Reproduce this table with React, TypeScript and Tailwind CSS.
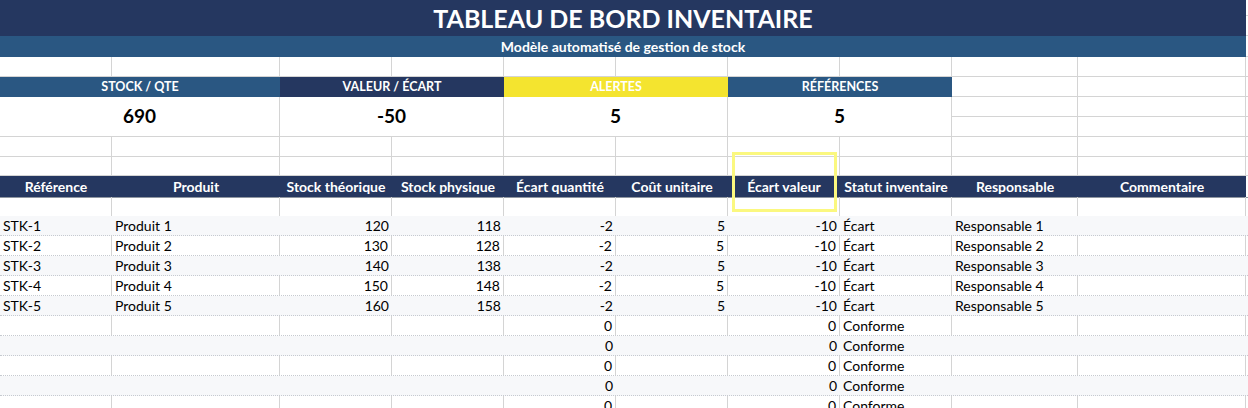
import React from "react";

const GRID =
  "grid grid-cols-[112px_168px_112px_112px_112px_112px_112px_112px_126px_168px_1fr]";
const GL = "border-[#d4d4d4]";

type Row = {
  a: string;
  b: string;
  c: string;
  d: string;
  e: string;
  f: string;
  g: string;
  h: string;
  i: string;
};

const rows: Row[] = [
  ...[1, 2, 3, 4, 5].map((n) => ({
    a: `STK-${n}`,
    b: `Produit ${n}`,
    c: String(110 + n * 10),
    d: String(108 + n * 10),
    e: "-2",
    f: "5",
    g: "-10",
    h: "Écart",
    i: `Responsable ${n}`,
  })),
  ...[1, 2, 3, 4, 5].map(() => ({
    a: "",
    b: "",
    c: "",
    d: "",
    e: "0",
    f: "",
    g: "0",
    h: "Conforme",
    i: "",
  })),
];

function EmptyRow({ h }: { h: string }) {
  return (
    <div className={`${GRID} ${h}`}>
      {Array.from({ length: 10 }).map((_, i) => (
        <div key={i} className={`border-r border-b ${GL}`} />
      ))}
      <div className={`border-b ${GL}`} />
    </div>
  );
}

const headers = [
  "Référence",
  "Produit",
  "Stock théorique",
  "Stock physique",
  "Écart quantité",
  "Coût unitaire",
  "Écart valeur",
  "Statut inventaire",
  "Responsable",
  "Commentaire",
];

function DataRow({ r, idx }: { r: Row; idx: number }) {
  const shaded = idx % 2 === 0;
  const cell = shaded
    ? "px-[3px] whitespace-nowrap overflow-hidden"
    : `px-[3px] whitespace-nowrap overflow-hidden border-r ${GL}`;
  return (
    <div
      className={`${GRID} h-[20px] border-b border-dotted border-[#c6cad0] text-[14px] leading-[19px] text-black ${
        shaded ? "bg-[#f7f8fa]" : "bg-white"
      }`}
    >
      <div className={cell}>{r.a}</div>
      <div className={cell}>{r.b}</div>
      <div className={`${cell} text-right`}>{r.c}</div>
      <div className={`${cell} text-right`}>{r.d}</div>
      <div className={`${cell} text-right`}>{r.e}</div>
      <div className={`${cell} text-right`}>{r.f}</div>
      <div className={`${cell} text-right`}>{r.g}</div>
      <div className={cell}>{r.h}</div>
      <div className={cell}>{r.i}</div>
      <div className={cell}></div>
      <div />
    </div>
  );
}

export default function App() {
  return (
    <div className="relative w-[1248px] h-[408px] overflow-hidden bg-white [font-family:Lato,'Noto_Sans',sans-serif]">
      {/* Title */}
      <div className={`${GRID} h-[36px]`}>
        <div className="col-span-10 bg-[#253760] flex items-center justify-center pb-[2px] text-white font-bold text-[25px]">
          TABLEAU DE BORD INVENTAIRE
        </div>
        <div className="flex flex-col">
          <div className={`h-[16px] border-b ${GL}`} />
          <div className={`h-[20px] border-b ${GL}`} />
        </div>
      </div>
      {/* Subtitle */}
      <div className={`${GRID} h-[21px]`}>
        <div className="col-span-10 bg-[#2a5782] flex items-center justify-center text-white font-bold text-[14px]">
          Modèle automatisé de gestion de stock
        </div>
        <div className={`border-b ${GL}`} />
      </div>

      <EmptyRow h="h-[20px]" />

      {/* KPI headers */}
      <div className={`${GRID} h-[20px] text-white font-bold text-[12.5px]`}>
        <div className="col-span-2 bg-[#2a5782] flex items-center justify-center">STOCK / QTE</div>
        <div className="col-span-2 bg-[#253760] flex items-center justify-center">VALEUR / ÉCART</div>
        <div className="col-span-2 bg-[#f4e42f] flex items-center justify-center">ALERTES</div>
        <div className="col-span-2 bg-[#2a5782] flex items-center justify-center">RÉFÉRENCES</div>
        <div className={`border-r border-b ${GL}`} />
        <div className={`border-r border-b ${GL}`} />
        <div className={`border-b ${GL}`} />
      </div>

      {/* KPI values */}
      <div className={`${GRID} h-[40px] text-black font-bold text-[19px]`}>
        {["690", "-50", "5", "5"].map((v, i) => (
          <div key={i} className={`col-span-2 border-r border-b ${GL} flex items-center justify-center`}>
            {v}
          </div>
        ))}
        {[0, 1].map((i) => (
          <div key={i} className={`flex flex-col border-r ${GL}`}>
            <div className={`h-[20px] border-b ${GL}`} />
            <div className={`h-[20px] border-b ${GL}`} />
          </div>
        ))}
        <div className="flex flex-col">
          <div className={`h-[20px] border-b ${GL}`} />
          <div className={`h-[20px] border-b ${GL}`} />
        </div>
      </div>

      <EmptyRow h="h-[20px]" />
      <EmptyRow h="h-[19px]" />

      {/* Table header */}
      <div className={`${GRID} h-[21px]`}>
        {headers.map((t) => (
          <div
            key={t}
            className="bg-[#253760] border-b border-[#8f96a0] flex items-center justify-center text-white font-bold text-[14px] whitespace-nowrap"
          >
            {t}
          </div>
        ))}
        <div className="border-b border-[#8f96a0]" />
      </div>

      {/* Blank row */}
      <div className={`${GRID} h-[19px]`}>
        {Array.from({ length: 10 }).map((_, i) => (
          <div key={i} className={`border-r ${GL}`} />
        ))}
        <div />
      </div>

      {rows.map((r, i) => (
        <DataRow key={i} r={r} idx={i} />
      ))}

      {/* Selection highlight */}
      <div className="absolute left-[732px] top-[152px] w-[105px] h-[60px] border-[3px] border-[#fbf87f] pointer-events-none" />
    </div>
  );
}
